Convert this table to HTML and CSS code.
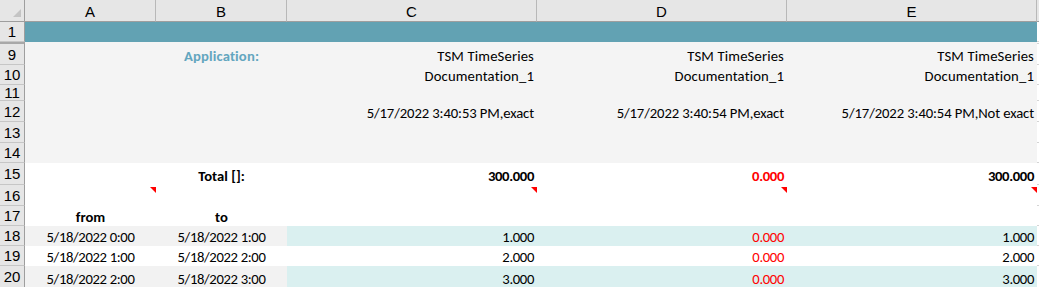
FILE: index.html
```html
<!DOCTYPE html>
<html>
<head>
<meta charset="utf-8">
<link rel="stylesheet" href="styles.css">
</head>
<body>
<div class="sheet">
  <div class="row hdr">
    <div class="corner"><span class="corner-tri"></span></div>
    <div class="ch">A</div><div class="ch">B</div><div class="ch">C</div><div class="ch">D</div><div class="ch">E</div><div class="ch ch-last"></div>
  </div>
  <div class="row h20 teal">
    <div class="rh">1</div>
    <div class="c span5"></div><div class="x"></div>
  </div>
  <div class="row h2">
    <div class="rh dbl"></div>
    <div class="c span5 gray"></div><div class="x"></div>
  </div>
  <div class="row h21 gray">
    <div class="rh">9</div>
    <div class="c"></div>
    <div class="c ctr app txt">Application:</div>
    <div class="c r txt">TSM TimeSeries</div>
    <div class="c r txt">TSM TimeSeries</div>
    <div class="c r txt">TSM TimeSeries</div>
    <div class="x"></div>
  </div>
  <div class="row h20 gray">
    <div class="rh">10</div>
    <div class="c"></div><div class="c"></div>
    <div class="c r txt">Documentation_1</div>
    <div class="c r txt">Documentation_1</div>
    <div class="c r txt">Documentation_1</div>
    <div class="x"></div>
  </div>
  <div class="row h16 gray">
    <div class="rh">11</div>
    <div class="c span5"></div><div class="x"></div>
  </div>
  <div class="row h21 gray">
    <div class="rh">12</div>
    <div class="c"></div><div class="c"></div>
    <div class="c r dt">5/17/2022 3:40:53 PM,exact</div>
    <div class="c r dt">5/17/2022 3:40:54 PM,exact</div>
    <div class="c r dt">5/17/2022 3:40:54 PM,Not exact</div>
    <div class="x"></div>
  </div>
  <div class="row h21 gray">
    <div class="rh">13</div>
    <div class="c span5"></div><div class="x"></div>
  </div>
  <div class="row h20 gray">
    <div class="rh">14</div>
    <div class="c span5"></div><div class="x"></div>
  </div>
  <div class="row h22">
    <div class="rh">15</div>
    <div class="c"></div>
    <div class="c ctr b">Total []:</div>
    <div class="c r b num">300.000</div>
    <div class="c r b red num">0.000</div>
    <div class="c r b num">300.000</div>
    <div class="x"></div>
  </div>
  <div class="row h21">
    <div class="rh">16</div>
    <div class="c note"><span class="tri"></span></div>
    <div class="c"></div>
    <div class="c note"><span class="tri"></span></div>
    <div class="c note"><span class="tri"></span></div>
    <div class="c note"><span class="tri"></span></div>
    <div class="x"></div>
  </div>
  <div class="row h20">
    <div class="rh">17</div>
    <div class="c ctr b">from</div>
    <div class="c ctr b">to</div>
    <div class="c"></div><div class="c"></div><div class="c"></div>
    <div class="x"></div>
  </div>
  <div class="row h20 band">
    <div class="rh">18</div>
    <div class="c ctr lg num">5/18/2022 0:00</div>
    <div class="c ctr lg num">5/18/2022 1:00</div>
    <div class="c r lt num">1.000</div>
    <div class="c r lt red num">0.000</div>
    <div class="c r lt num">1.000</div>
    <div class="x"></div>
  </div>
  <div class="row h20">
    <div class="rh">19</div>
    <div class="c ctr num">5/18/2022 1:00</div>
    <div class="c ctr num">5/18/2022 2:00</div>
    <div class="c r num">2.000</div>
    <div class="c r red num">0.000</div>
    <div class="c r num">2.000</div>
    <div class="x"></div>
  </div>
  <div class="row h22 band">
    <div class="rh">20</div>
    <div class="c ctr lg num">5/18/2022 2:00</div>
    <div class="c ctr lg num">5/18/2022 3:00</div>
    <div class="c r lt num">3.000</div>
    <div class="c r lt red num">0.000</div>
    <div class="c r lt num">3.000</div>
    <div class="x"></div>
  </div>
</div>
</body>
</html>
```

FILE: styles.css
```css
html, body {
  margin: 0;
  padding: 0;
  background: #ffffff;
}
.sheet {
  width: 1039px;
  height: 287px;
  overflow: hidden;
  font-family: Carlito, Calibri, Lato, sans-serif;
  font-size: 14.67px;
  color: #000000;
}
.row {
  display: grid;
  grid-template-columns: 25px 131px 131px 250px 250px 250px 2px;
}
.h2 { height: 2px; }
.h16 { height: 16px; }
.h20 { height: 20px; }
.h21 { height: 21px; }
.h22 { height: 22px; }

.hdr {
  height: 22px;
  background: #e6e6e6;
  font-family: "Liberation Sans", Arial, sans-serif;
  font-size: 15px;
}
.corner {
  position: relative;
  border-right: 1px solid #9e9e9e;
  border-bottom: 1px solid #9e9e9e;
}
.corner-tri {
  position: absolute;
  right: 3px;
  bottom: 4px;
  width: 0;
  height: 0;
  border-left: 8px solid transparent;
  border-bottom: 8px solid #c4c4c4;
}
.ch {
  display: flex;
  align-items: center;
  justify-content: center;
  border-right: 1px solid #b8b8b8;
  border-bottom: 1px solid #9e9e9e;
  line-height: 1;
  padding-top: 1px;
}
.ch-last { border-right: none; }

.rh {
  display: flex;
  align-items: center;
  justify-content: center;
  background: #e6e6e6;
  border-right: 1px solid #9e9e9e;
  border-bottom: 1px solid #c6c6c6;
  font-family: "Liberation Sans", Arial, sans-serif;
  font-size: 15px;
  line-height: 1;
  color: #000000;
  overflow: hidden;
}
.rh.dbl {
  border-bottom: 1px solid #a8a8a8;
  border-top: 1px solid #a8a8a8;
  background: #f4f4f4;
  box-sizing: border-box;
}
.x {
  background: #ffffff;
  border-bottom: 1px solid #d4d4d4;
}

.c {
  display: flex;
  align-items: flex-end;
  justify-content: flex-start;
  padding: 0 3px 0 3px;
  white-space: nowrap;
  line-height: 18px;
  overflow: hidden;
}
.span5 { grid-column: span 5; }
.r { justify-content: flex-end; }
.ctr { justify-content: center; }
.b { font-weight: 700; }
.red { color: #ff0000; }
.num { letter-spacing: -0.35px; }
.dt { letter-spacing: -0.1px; }
.txt { letter-spacing: 0.15px; }

.teal .c { background: #62a2b3; }
.gray .c, .c.gray { background: #f4f4f4; }
.app { color: #63a6bf; font-weight: 700; }
.lg { background: #f2f2f2; }
.lt { background: #daf0f0; }

.note { position: relative; }
.tri {
  position: absolute;
  top: 2px;
  right: 0;
  width: 0;
  height: 0;
  border-left: 6px solid transparent;
  border-top: 6px solid #ff0000;
}
```
